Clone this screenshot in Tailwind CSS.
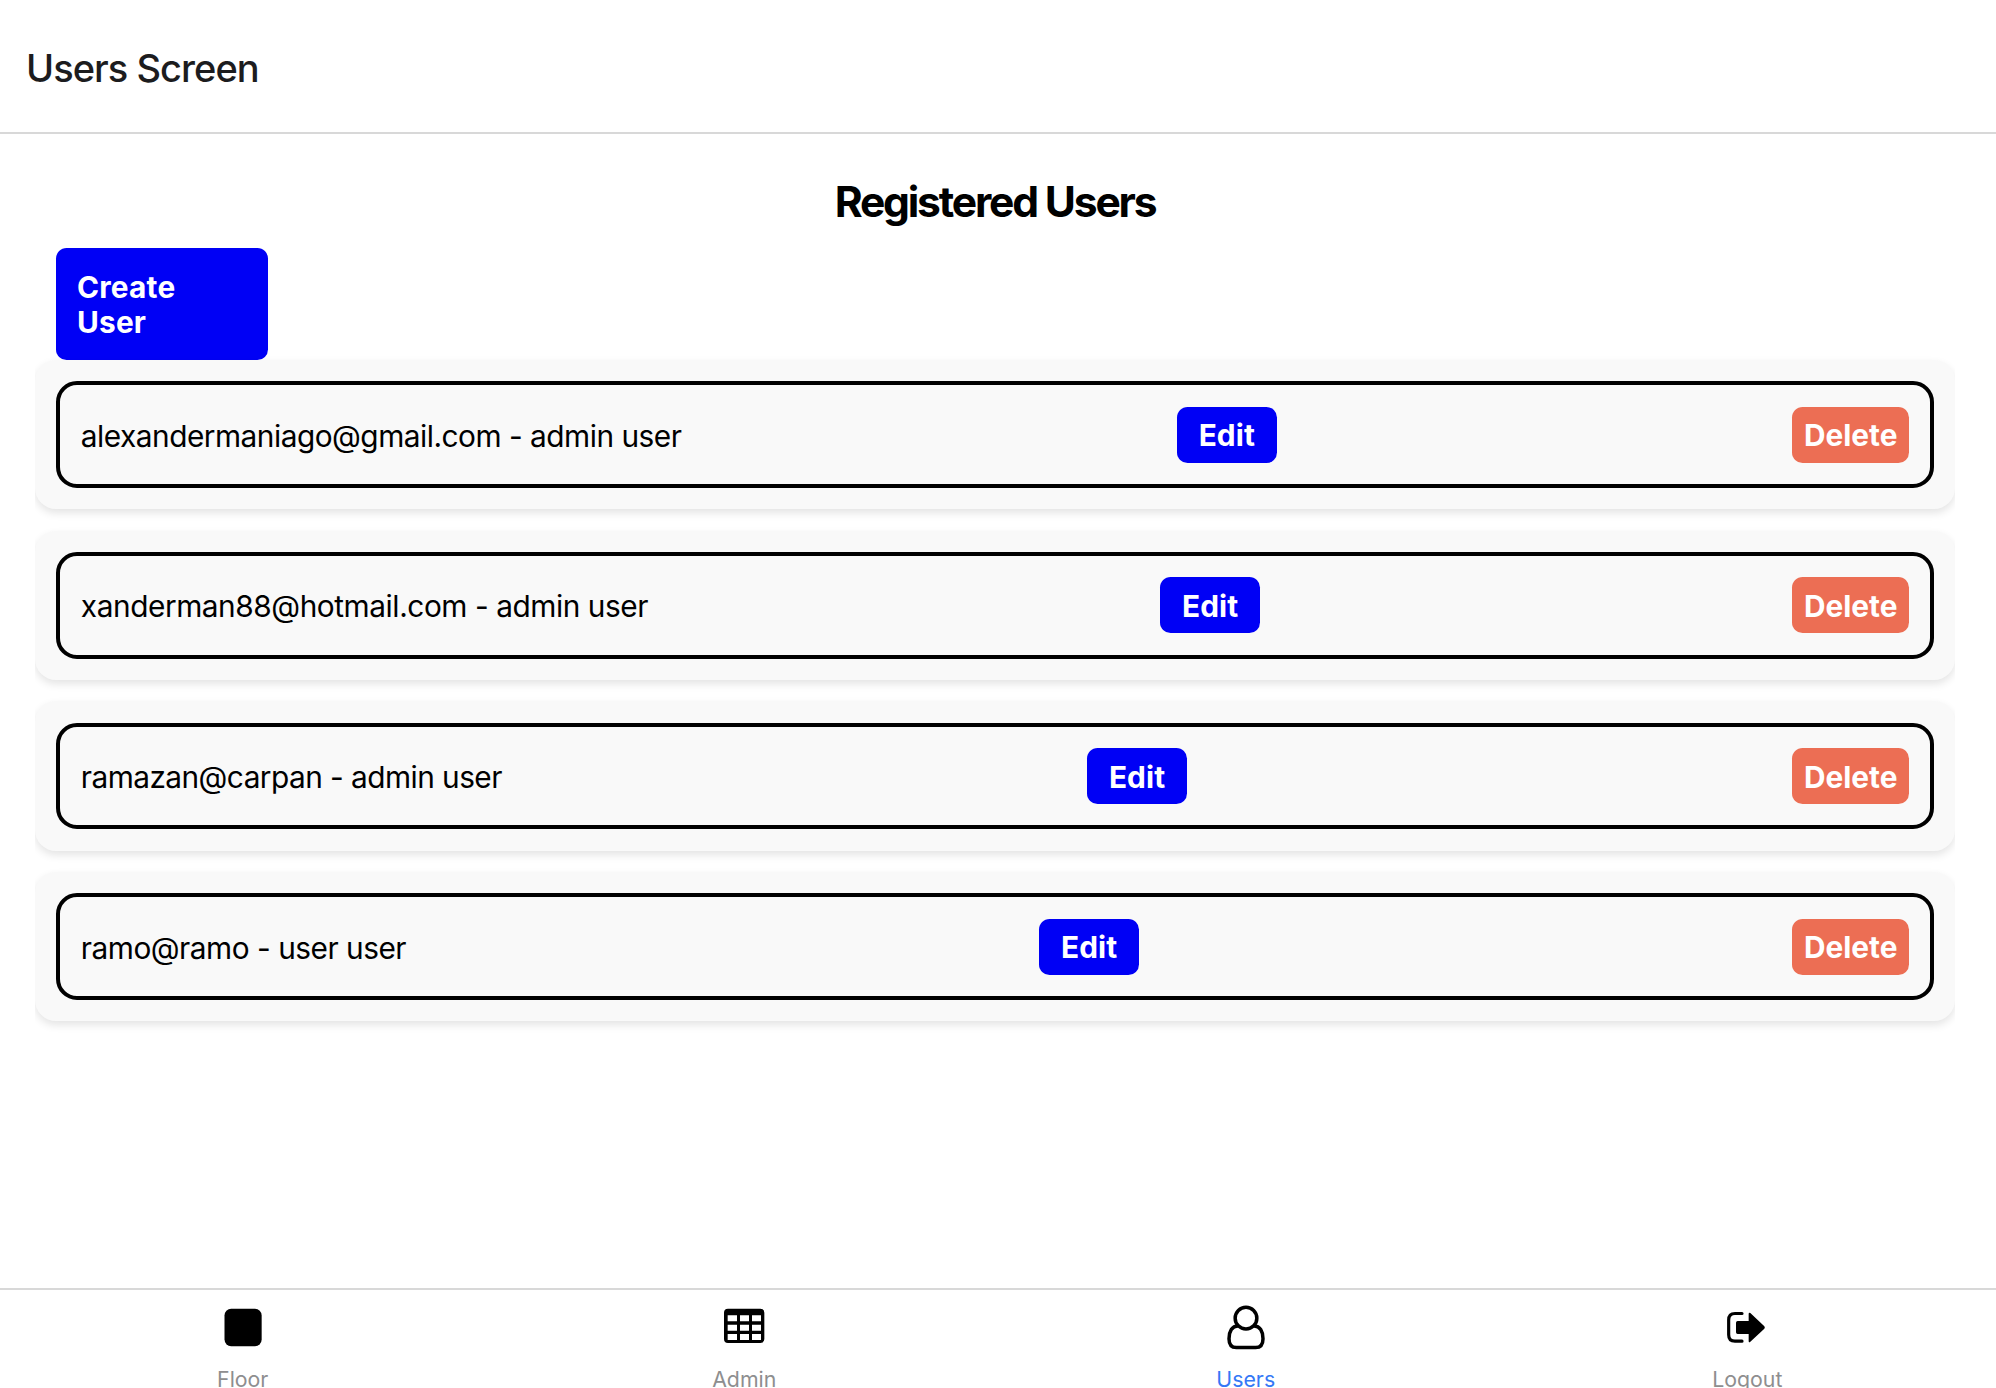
<!DOCTYPE html>
<html lang="en">
<head>
<meta charset="utf-8">
<title>Users Screen</title>
<script src="https://cdn.jsdelivr.net/npm/@tailwindcss/browser@4"></script>
</head>
<body class="bg-white font-['Inter',sans-serif] text-black">
<div class="flex h-[1388px] w-[1996px] flex-col overflow-hidden">
  <header class="flex h-[134px] shrink-0 items-center border-b-2 border-[#d8d8d8] pt-[3px] pl-[26px]">
    <h1 class="text-[38px] leading-[46px] font-medium tracking-[-0.95px] text-[#1c1c1e]">Users Screen</h1>
  </header>
  <main class="ml-[35px] flex w-[1920px] grow flex-col overflow-hidden">
    <h2 class="mt-[42px] text-center text-[42.6px] leading-[51px] font-bold tracking-[-2.2px]">Registered Users</h2>
    <button class="mt-[21px] ml-[21px] w-[212px] shrink-0 rounded-[10.6px] bg-[#0000f5] px-[21px] pt-[22px] pb-[20px] text-left text-[29.8px] leading-[35px] font-bold tracking-[0.2px] text-white">Create<br>User</button>
    <ul class="flex flex-col gap-[21.33px]">
      <li class="h-[149.33px] rounded-[21px] bg-[#f9f9f9] p-[21.33px] shadow-[0_4px_9px_rgba(0,0,0,0.11)]">
        <div class="flex h-full items-center justify-between rounded-[21px] border-4 border-black px-[20.5px]">
          <span class="pt-[3px] text-[29.8px] tracking-[-0.49px]">alexandermaniago@gmail.com - admin user</span>
          <button class="mr-[20px] h-14 w-[100px] rounded-[10.6px] bg-[#0000f5] pt-[2px] text-[29.8px] font-bold tracking-[0.1px] text-white">Edit</button>
          <button class="h-14 w-[117px] rounded-[10.6px] bg-[#ec6e54] pt-[2px] text-[29.8px] font-bold text-white">Delete</button>
        </div>
      </li>
      <li class="h-[149.33px] rounded-[21px] bg-[#f9f9f9] p-[21.33px] shadow-[0_4px_9px_rgba(0,0,0,0.11)]">
        <div class="flex h-full items-center justify-between rounded-[21px] border-4 border-black px-[20.5px]">
          <span class="pt-[3px] text-[29.8px] tracking-[-0.43px]">xanderman88@hotmail.com - admin user</span>
          <button class="mr-[20px] h-14 w-[100px] rounded-[10.6px] bg-[#0000f5] pt-[2px] text-[29.8px] font-bold tracking-[0.1px] text-white">Edit</button>
          <button class="h-14 w-[117px] rounded-[10.6px] bg-[#ec6e54] pt-[2px] text-[29.8px] font-bold text-white">Delete</button>
        </div>
      </li>
      <li class="h-[149.33px] rounded-[21px] bg-[#f9f9f9] p-[21.33px] shadow-[0_4px_9px_rgba(0,0,0,0.11)]">
        <div class="flex h-full items-center justify-between rounded-[21px] border-4 border-black px-[20.5px]">
          <span class="pt-[3px] text-[29.8px] tracking-[-0.54px]">ramazan@carpan - admin user</span>
          <button class="mr-[20px] h-14 w-[100px] rounded-[10.6px] bg-[#0000f5] pt-[2px] text-[29.8px] font-bold tracking-[0.1px] text-white">Edit</button>
          <button class="h-14 w-[117px] rounded-[10.6px] bg-[#ec6e54] pt-[2px] text-[29.8px] font-bold text-white">Delete</button>
        </div>
      </li>
      <li class="h-[149.33px] rounded-[21px] bg-[#f9f9f9] p-[21.33px] shadow-[0_4px_9px_rgba(0,0,0,0.11)]">
        <div class="flex h-full items-center justify-between rounded-[21px] border-4 border-black px-[20.5px]">
          <span class="pt-[3px] text-[29.8px] tracking-[-0.48px]">ramo@ramo - user user</span>
          <button class="mr-[20px] h-14 w-[100px] rounded-[10.6px] bg-[#0000f5] pt-[2px] text-[29.8px] font-bold tracking-[0.1px] text-white">Edit</button>
          <button class="h-14 w-[117px] rounded-[10.6px] bg-[#ec6e54] pt-[2px] text-[29.8px] font-bold text-white">Delete</button>
        </div>
      </li>
    </ul>
  </main>
  <nav class="-ml-[8px] grid h-[100px] w-[2006px] shrink-0 grid-cols-4 border-t-2 border-[#d8d8d8] text-[21.3px] leading-[26px] text-[#8e8e8f]">
    <a class="flex flex-col items-center gap-[15px] pt-[9px]">
      <svg class="size-[52px] shrink-0" viewBox="109.5 90 156 156"><rect x="132" y="119.5" width="111.500" height="112" rx="20"/></svg>
      <span>Floor</span>
    </a>
    <a class="flex flex-col items-center gap-[15px] pt-[9px]">
      <svg class="size-[52px] shrink-0" viewBox="114 90 156 156"><path fill-rule="evenodd" d="M144 119H241Q253 119 253 131V210Q253 222 241 222H144Q132 222 132 210V131Q132 119 144 119ZM143 139V157H171V139ZM180 139V157H207V139ZM216 139V157H243V139ZM143 167V185H171V167ZM180 167V185H207V167ZM216 167V185H243V167ZM143 195V213H171V195ZM180 195V213H207V195ZM216 195V213H243V195Z"/></svg>
      <span>Admin</span>
    </a>
    <a class="flex flex-col items-center gap-[15px] pt-[9px] text-[#3478f6]">
      <svg class="size-[52px] shrink-0 fill-none stroke-black" viewBox="119 90 156 156" stroke-width="10.500"><circle cx="197" cy="147.500" r="32.500"/><path d="M174 171C155 170 146 188 146 209C146 225 153 235.500 168 235.500H226C241 235.500 248 225 248 209C248 188 239 170 220 171"/></svg>
      <span>Users</span>
    </a>
    <a class="flex flex-col items-center gap-[15px] pt-[9px]">
      <svg class="size-[52px] shrink-0" viewBox="123 90 156 156"><path d="M186 133.500H165Q146 133.500 146 153V197Q146 216.500 165 216.500H186" fill="none" stroke="#000" stroke-width="9.500" stroke-linecap="round"/><path d="M173 156H206V135Q206 129 211 132L253 172Q256 175.500 253 179L211 218Q206 222 206 216V195H173Q168 195 168 190V161Q168 156 173 156Z"/></svg>
      <span>Logout</span>
    </a>
  </nav>
</div>
</body>
</html>
